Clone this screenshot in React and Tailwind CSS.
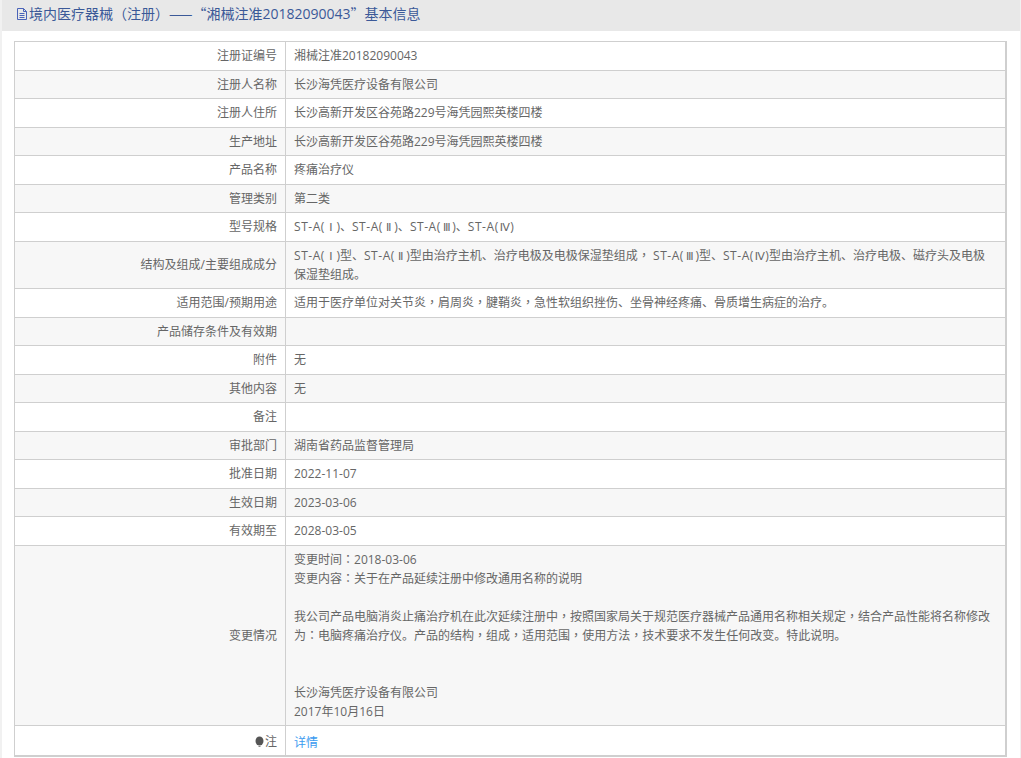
import React from 'react';

const rows = [
  ['注册证编号', '湘械注准20182090043'],
  ['注册人名称', '长沙海凭医疗设备有限公司'],
  ['注册人住所', '长沙高新开发区谷苑路229号海凭园熙英楼四楼'],
  ['生产地址', '长沙高新开发区谷苑路229号海凭园熙英楼四楼'],
  ['产品名称', '疼痛治疗仪'],
  ['管理类别', '第二类'],
  ['型号规格', 'ST-A(Ⅰ)、ST-A(Ⅱ)、ST-A(Ⅲ)、ST-A(Ⅳ)'],
  ['结构及组成/主要组成成分', 'ST-A(Ⅰ)型、ST-A(Ⅱ)型由治疗主机、治疗电极及电极保湿垫组成， ST-A(Ⅲ)型、ST-A(Ⅳ)型由治疗主机、治疗电极、磁疗头及电极\n保湿垫组成。'],
  ['适用范围/预期用途', '适用于医疗单位对关节炎，肩周炎，腱鞘炎，急性软组织挫伤、坐骨神经疼痛、骨质增生病症的治疗。'],
  ['产品储存条件及有效期', ''],
  ['附件', '无'],
  ['其他内容', '无'],
  ['备注', ''],
  ['审批部门', '湖南省药品监督管理局'],
  ['批准日期', '2022-11-07'],
  ['生效日期', '2023-03-06'],
  ['有效期至', '2028-03-05'],
];

// centred punctuation and the wide roman numerals come from other fonts
const fmt = (text) =>
  text.split(/([，：（）]|[“”—]+|[ⅠⅡⅢⅣ]|ST-A)/).map((part, i) => {
    if (/^[，：（）]$/.test(part)) {
      return <span key={i} className="font-['Noto_Sans_CJK_TC'] leading-none">{part}</span>;
    }
    if (/^[“”—]+$/.test(part)) {
      return <span key={i} className="font-['Noto_Sans_CJK_SC'] leading-none">{part}</span>;
    }
    if (part === 'ST-A') {
      return <span key={i} className="tracking-[0.55px]">{part}</span>;
    }
    if (/^[ⅠⅡⅢⅣ]$/.test(part)) {
      return <span key={i} className="inline-block w-3 text-center font-['DejaVu_Sans'] text-[11px] leading-none tracking-[-1px]">{part}</span>;
    }
    return part;
  });

const changeNote = (
  <>
    {fmt('变更时间：2018-03-06')}
    <br />
    {fmt('变更内容：关于在产品延续注册中修改通用名称的说明')}
    <br />
    <br />
    {fmt('我公司产品电脑消炎止痛治疗机在此次延续注册中，按照国家局关于规范医疗器械产品通用名称相关规定，结合产品性能将名称修改为：电脑疼痛治疗仪。产品的结构，组成，适用范围，使用方法，技术要求不发生任何改变。特此说明。')}
    <br />
    <br />
    <br />
    长沙海凭医疗设备有限公司
    <br />
    2017年10月16日
  </>
);

const Row = ({ label, children, odd }) => (
  <tr className={odd ? 'bg-[#f7f7f7]' : 'bg-white'}>
    <td className="w-[271px] border border-[#cfcfcf] px-2 py-[4.25px] text-right align-middle">{label}</td>
    <td className="whitespace-pre-line border border-[#cfcfcf] px-2 py-[4.25px] align-middle">{children}</td>
  </tr>
);

export default function App() {
  return (
    <div className="h-[758px] overflow-hidden bg-[#f1f1f1] pl-[2px] pr-[1px] font-['Open_Sans','Noto_Sans_CJK_SC',sans-serif] text-xs leading-[19px] text-[#666]">
      <div className="h-[758px] bg-white">
        <div className="flex h-[31px] items-center bg-[#e8e8e8] pb-[3px] pl-[13px] text-sm text-[#3b5998]">
          <svg width="14" height="14" viewBox="0 0 14 14" fill="none" stroke="#4a63b8" strokeWidth="1">
            <path d="M2.5 1.5h6l3 3v8h-9z" />
            <path d="M8.5 1.5v3h3M4.5 6.5h5M4.5 8.5h5M4.5 10.5h5" />
          </svg>
          <span>{fmt('境内医疗器械（注册）——“湘械注准20182090043”基本信息')}</span>
        </div>
        <div className="pl-3 pt-[10px]">
          <table className="w-[993px] table-fixed border-collapse border border-r-2 border-b-2 border-[#cfcfcf]">
            <tbody>
              {rows.map(([label, value], i) => (
                <Row key={label} label={label} odd={i % 2 === 1}>
                  {fmt(value)}
                </Row>
              ))}
              <Row label="变更情况" odd>
                {changeNote}
              </Row>
              <Row
                label={
                  <span className="inline-flex translate-y-0.5 items-center">
                    <svg width="11" height="12" viewBox="0 0 11 12">
                      <ellipse cx="5.5" cy="5" rx="4" ry="4.6" fill="#555" />
                      <path d="M4.5 10.5h2" stroke="#888" strokeWidth="1" />
                    </svg>
                    注
                  </span>
                }
              >
                <span className="inline-block translate-y-0.5 text-[#3b9bf0]">详情</span>
              </Row>
            </tbody>
          </table>
        </div>
      </div>
    </div>
  );
}
